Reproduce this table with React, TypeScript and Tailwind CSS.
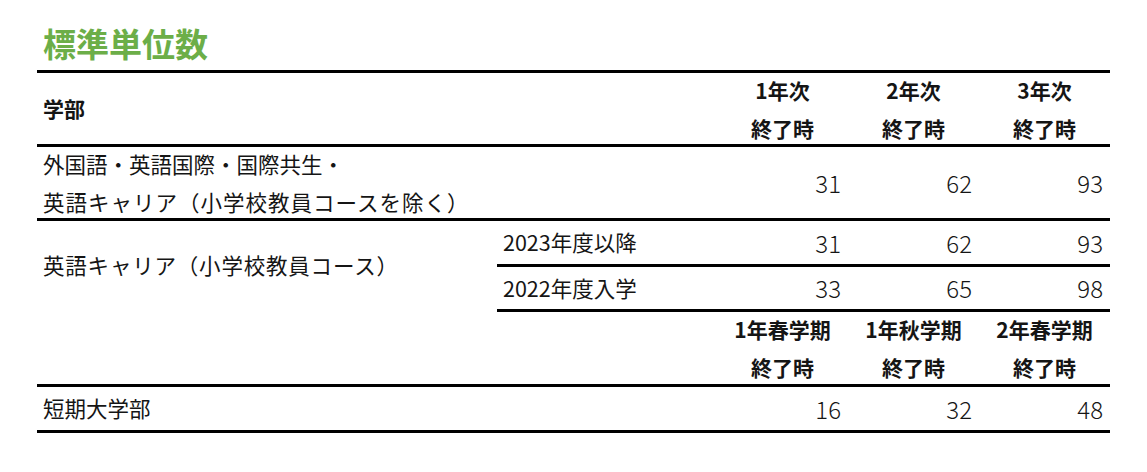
import React from "react";

const cell = "border-t-[3px] border-black flex items-center";

function Nums({ v, row }: { v: string[]; row: string }) {
  const cols = ["col-start-3", "col-start-4", "col-start-5"];
  return (
    <>
      {v.map((n, i) => (
        <div key={i} className={`${cell} ${cols[i]} ${row} justify-end pr-[7px] text-[24px] leading-none font-light`}>
          {n}
        </div>
      ))}
    </>
  );
}

function Heads({ v, row }: { v: string[]; row: string }) {
  const cols = ["col-start-3", "col-start-4", "col-start-5"];
  return (
    <>
      {v.map((n, i) => (
        <div key={i} className={`${cell} ${cols[i]} ${row} flex-col justify-center font-bold text-[21px] leading-[38px] text-center`}>
          <div>{n}</div>
          <div>終了時</div>
        </div>
      ))}
    </>
  );
}

export default function App() {
  return (
    <div
      className="w-[1147px] h-[472px] bg-white text-[#151515] pl-[37px]"
      style={{ fontFamily: '"Noto Sans CJK JP", "Noto Sans", sans-serif' }}
    >
      <div className="pt-[22px] pl-[6px] h-[70px] text-[33px] leading-[42px] font-bold text-[#6cae48]">標準単位数</div>
      <div className="grid grid-cols-[460px_220px_131px_131px_131px] grid-rows-[74px_74px_46px_45px_75px_49px] text-[21.5px]">
        {/* header */}
        <div className={`${cell} col-start-1 col-span-2 row-start-1 pl-[6px] font-bold text-[21px]`}>学部</div>
        <Heads v={["1年次", "2年次", "3年次"]} row="row-start-1" />

        {/* row 2 */}
        <div className={`${cell} col-start-1 col-span-2 row-start-2 flex-col items-start justify-center pl-[6px] leading-[38px]`}>
          <div>外国語・英語国際・国際共生・</div>
          <div className="tracking-[1px]">英語キャリア（小学校教員コースを除く）</div>
        </div>
        <Nums v={["31", "62", "93"]} row="row-start-2" />

        {/* row 3-4 */}
        <div className={`${cell} col-start-1 row-start-3 row-span-2 pl-[6px] tracking-[0.8px]`}>英語キャリア（小学校教員コース）</div>
        <div className={`${cell} col-start-2 row-start-3 pl-[6px]`}>2023年度以降</div>
        <Nums v={["31", "62", "93"]} row="row-start-3" />
        <div className={`${cell} col-start-2 row-start-4 pl-[6px]`}>2022年度入学</div>
        <Nums v={["33", "65", "98"]} row="row-start-4" />

        {/* row 5 */}
        <div className={`${cell} col-start-2 row-start-5`}></div>
        <Heads v={["1年春学期", "1年秋学期", "2年春学期"]} row="row-start-5" />

        {/* row 6 */}
        <div className={`${cell} border-b-[3px] col-start-1 col-span-2 row-start-6 pl-[6px]`}>短期大学部</div>
        {["16", "32", "48"].map((n, i) => (
          <div
            key={i}
            className={`${cell} border-b-[3px] ${["col-start-3", "col-start-4", "col-start-5"][i]} row-start-6 justify-end pr-[7px] text-[24px] leading-none font-light`}
          >
            {n}
          </div>
        ))}
      </div>
    </div>
  );
}
